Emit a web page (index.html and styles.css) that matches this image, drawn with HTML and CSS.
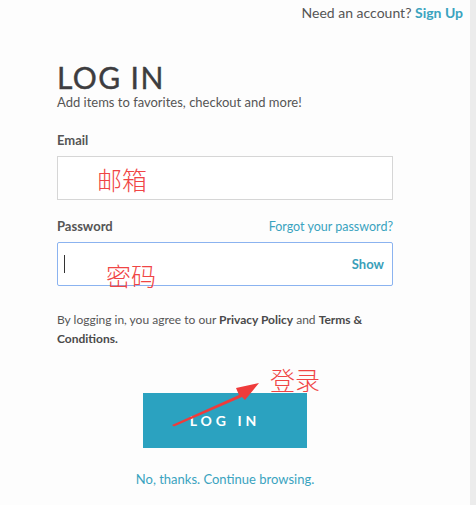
FILE: index.html
```html
<!DOCTYPE html>
<html lang="zh-CN">
<head>
    <meta charset="UTF-8">
    <meta name="viewport" content="width=device-width, initial-scale=1.0">
    <title>Log In</title>
    <link rel="stylesheet" href="styles.css">
</head>
<body>
    <div class="page">
        <main class="main">
            <div class="top-bar">
                Need an account? <a href="#" class="link strong">Sign Up</a>
            </div>

            <form class="login-form">
                <h1 class="login-title">LOG IN</h1>
                <p class="login-sub">Add items to favorites, checkout and more!</p>

                <div class="field">
                    <div class="field-head">
                        <label class="field-label" for="email">Email</label>
                    </div>
                    <div class="input-box">
                        <input id="email" class="text-input" type="text">
                        <span class="note note-email">邮箱</span>
                    </div>
                </div>

                <div class="field">
                    <div class="field-head">
                        <label class="field-label" for="password">Password</label>
                        <a href="#" class="link small">Forgot your password?</a>
                    </div>
                    <div class="input-box focused">
                        <span class="caret"></span>
                        <input id="password" class="text-input" type="password">
                        <a href="#" class="show-btn">Show</a>
                        <span class="note note-pass">密码</span>
                    </div>
                </div>

                <p class="terms">By logging in, you agree to our <b>Privacy Policy</b> and <b>Terms &amp;<br>Conditions.</b></p>

                <div class="submit-row">
                    <button type="button" class="submit-btn">LOG IN</button>
                    <span class="note note-login">登录</span>
                    <svg class="arrow" width="100" height="50" viewBox="0 0 100 50">
                        <path d="M1 46 L68 16 L65 9 L88 4 L74 21 L71 18 L3 47.5 Z" fill="#ef3b3b"/>
                    </svg>
                </div>

                <a href="#" class="link continue">No, thanks. Continue browsing.</a>
            </form>
        </main>
        <div class="side-strip"></div>
    </div>
</body>
</html>
```

FILE: styles.css
```css
* {
    margin: 0;
    padding: 0;
    box-sizing: border-box;
}

body {
    font-family: "Lato", "Open Sans", sans-serif;
    background: #fdfdfd;
    color: #555;
    height: 505px;
    overflow: hidden;
}

.page {
    display: flex;
    height: 100%;
}

.main {
    flex: 1;
}

.side-strip {
    width: 6px;
    background: #ececec;
}

.top-bar {
    text-align: right;
    padding: 4px 7px 0 0;
    font-size: 14px;
    color: #555;
    height: 30px;
}

.link {
    color: #3aa3bf;
    text-decoration: none;
}

.link.strong {
    font-weight: 700;
}

.link.small {
    font-size: 12.5px;
}

.login-form {
    width: 336px;
    margin: 30px 0 0 57px;
    display: flex;
    flex-direction: column;
}

.login-title {
    font-size: 30px;
    font-weight: 400;
    letter-spacing: 1.4px;
    color: #3d3d40;
    line-height: 34px;
    -webkit-text-stroke: 0.4px #3d3d40;
}

.login-sub {
    font-size: 13px;
    color: #555;
}

.field {
    margin-top: 22px;
}

.field + .field {
    margin-top: 18px;
}

.field-head {
    display: flex;
    justify-content: space-between;
    align-items: baseline;
    margin-bottom: 8px;
}

.field-label {
    font-size: 13px;
    font-weight: 700;
    color: #555;
}

.input-box {
    position: relative;
    display: flex;
    align-items: center;
    height: 44px;
    border: 1px solid #d6d6d6;
    background: #fff;
    padding: 0 8px 0 6px;
}

.input-box.focused {
    border-color: #8bb3f0;
    border-radius: 2px;
}

.caret {
    width: 1px;
    height: 18px;
    background: #333;
}

.text-input {
    flex: 1;
    border: none;
    outline: none;
    background: transparent;
    height: 100%;
}

.show-btn {
    font-size: 13px;
    font-weight: 700;
    color: #3a9fba;
    text-decoration: none;
}

.note {
    position: absolute;
    font-family: "Noto Sans CJK SC", sans-serif;
    font-weight: 300;
    font-size: 25px;
    color: #f04545;
    line-height: 1;
}

.note-email {
    left: 39px;
    top: 10px;
}

.note-pass {
    left: 48px;
    top: 20px;
}

.terms {
    margin-top: 24px;
    font-size: 12px;
    line-height: 19px;
    color: #555;
}

.terms b {
    color: #4a4a4a;
}

.submit-row {
    position: relative;
    display: flex;
    justify-content: center;
    margin-top: 45px;
}

.submit-btn {
    width: 164px;
    height: 55px;
    border: none;
    background: #2ba2c0;
    color: #fff;
    font-family: "Lato", sans-serif;
    font-weight: 700;
    font-size: 14px;
    letter-spacing: 4px;
}

.note-login {
    left: 213px;
    top: -26px;
}

.arrow {
    position: absolute;
    left: 114px;
    top: -14px;
}

.continue {
    align-self: center;
    margin-top: 23px;
    font-size: 13px;
}
```
